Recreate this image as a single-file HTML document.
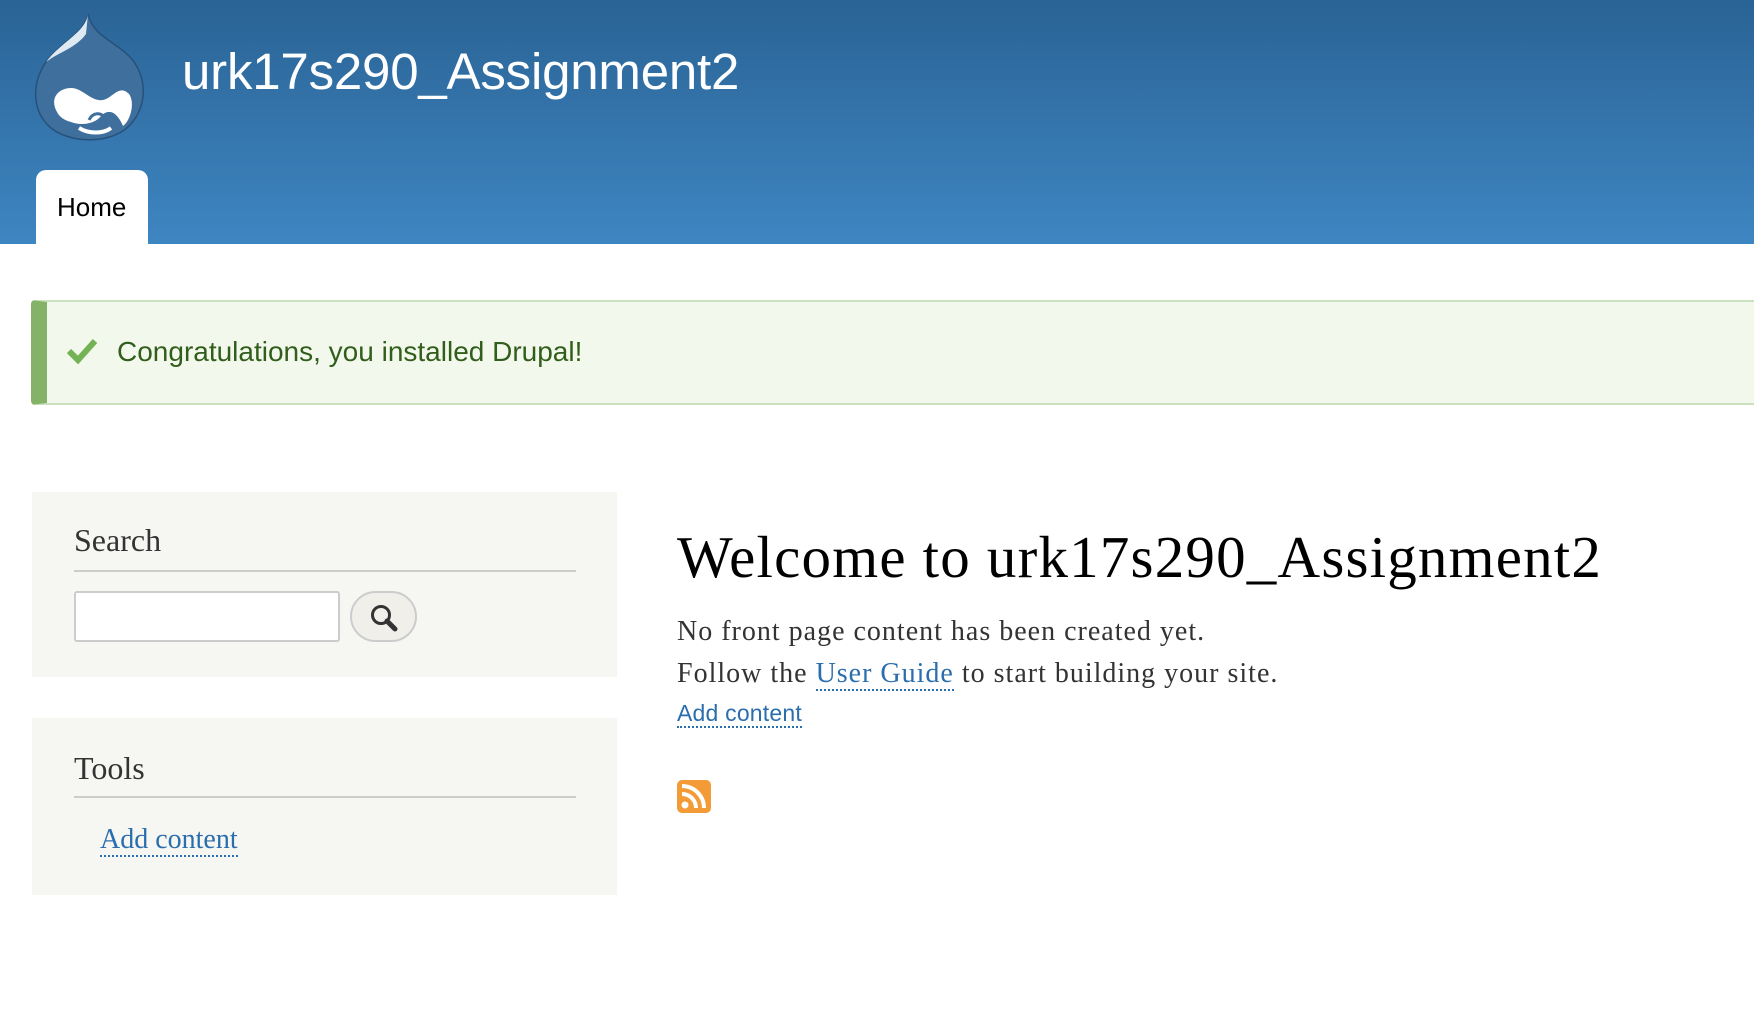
<!DOCTYPE html>
<html><head><meta charset="utf-8"><style>
*{margin:0;padding:0;box-sizing:border-box}
body{width:1754px;height:1012px;overflow:hidden;background:#fff;font-family:"Liberation Sans",Arial,sans-serif;position:relative}
.hdr{position:absolute;left:0;top:0;width:1754px;height:244px;background:linear-gradient(#2a6395,#3e86c2)}
.title{position:absolute;left:182px;top:42px;color:#fff;font-size:51px;letter-spacing:-0.2px}
.tab{position:absolute;left:36px;top:170px;width:112px;height:74px;background:#fff;border-radius:10px 10px 0 0}
.tab span{position:absolute;left:21px;top:22px;font-size:26px;color:#000}
.msg{position:absolute;left:31px;top:300px;width:1723px;height:105px;background:#f3f8ed;border:2px solid #c9e1bd;border-left:16px solid #84b267;border-right:none;border-radius:4px 0 0 4px}
.msg span{position:absolute;left:70px;top:34px;font-size:28px;color:#325e1c}
.blk{position:absolute;left:32px;width:585px;background:#f6f6f2}
.h2{position:absolute;left:42px;font-family:"Liberation Serif",Georgia,serif;font-size:32px;color:#333}
.line{position:absolute;left:42px;width:502px;height:2px;background:#ccc}
.inp{position:absolute;left:42px;top:99px;width:266px;height:51px;background:#fff;border:2px solid #ccc;border-radius:3px}
.btn{position:absolute;left:318px;top:99px;width:67px;height:51px;background:#f0efea;border:2px solid #ccc;border-radius:26px}
.lnk{color:#2a6ead;border-bottom:2px dotted #2a6ead}
h1{position:absolute;left:677px;top:523px;font-family:"Liberation Serif",Georgia,serif;font-weight:normal;font-size:59px;letter-spacing:1.2px;color:#000;white-space:nowrap}
.p{position:absolute;left:677px;font-family:"Liberation Serif",Georgia,serif;font-size:28px;letter-spacing:1px;color:#333;white-space:nowrap}
</style></head><body>
<div class="hdr">
<svg style="position:absolute;left:31px;top:12px" width="118" height="130" viewBox="0 0 118 130">
<path d="M57 2 C55 20 30 30 15 50 C0 72 1 100 20 116 C40 132 80 132 98 114 C118 94 116 62 98 44 C82 28 62 24 57 2Z" fill="#3f6f9c" stroke="#26517a" stroke-width="1.5"/>
<path d="M57 2 C55 20 30 30 15 50 C28 40 45 36 55 22Z" fill="#dfe9f2"/>
<path d="M26 100 C18 86 28 76 40 76 C52 76 60 90 72 88 C82 86 88 72 98 82 C104 90 100 108 92 114 C86 100 78 96 70 104 C64 112 50 114 40 110 C32 108 28 104 26 100Z" fill="#fff"/>
<path d="M48 116 C58 122 72 122 80 116" stroke="#fff" stroke-width="4" fill="none"/>
<path d="M58 108 C62 100 70 100 74 106" stroke="#3f6f9c" stroke-width="3" fill="none"/>
</svg>
<div class="title">urk17s290_Assignment2</div>
<div class="tab"><span>Home</span></div>
</div>
<div class="msg">
<svg style="position:absolute;left:19px;top:35px" width="32" height="28" viewBox="0 0 32 28"><path d="M3 14 L12 23 L29 4" stroke="#73b355" stroke-width="6" fill="none"/></svg>
<span>Congratulations, you installed Drupal!</span></div>
<div class="blk" style="top:492px;height:185px">
<div class="h2" style="top:30px">Search</div>
<div class="line" style="top:78px"></div>
<div class="inp"></div>
<div class="btn"><svg style="position:absolute;left:17px;top:10px" width="32" height="32" viewBox="0 0 32 32"><circle cx="12" cy="12" r="8.5" stroke="#333" stroke-width="3" fill="none"/><path d="M18 18 L26 26" stroke="#333" stroke-width="5" stroke-linecap="round"/></svg></div>
</div>
<div class="blk" style="top:718px;height:177px">
<div class="h2" style="top:32px">Tools</div>
<div class="line" style="top:78px"></div>
<div class="h2" style="left:68px;top:106px;font-size:28px"><span class="lnk">Add content</span></div>
</div>
<h1>Welcome to urk17s290_Assignment2</h1>
<div class="p" style="top:616px">No front page content has been created yet.</div>
<div class="p" style="top:658px">Follow the <span class="lnk">User Guide</span> to start building your site.</div>
<div class="p" style="top:700px;font-family:'Liberation Sans',Arial,sans-serif;font-size:23px;letter-spacing:0.2px"><span class="lnk">Add content</span></div>
<svg style="position:absolute;left:677px;top:780px" width="34" height="33" viewBox="0 0 34 33"><rect width="34" height="33" rx="5" fill="#f39b36"/><circle cx="8" cy="25" r="3.5" fill="#fff"/><path d="M5 14 A14 14 0 0 1 19 28" stroke="#fff" stroke-width="4" fill="none"/><path d="M5 6 A22 22 0 0 1 27 28" stroke="#fff" stroke-width="4" fill="none"/></svg>
</body></html>
